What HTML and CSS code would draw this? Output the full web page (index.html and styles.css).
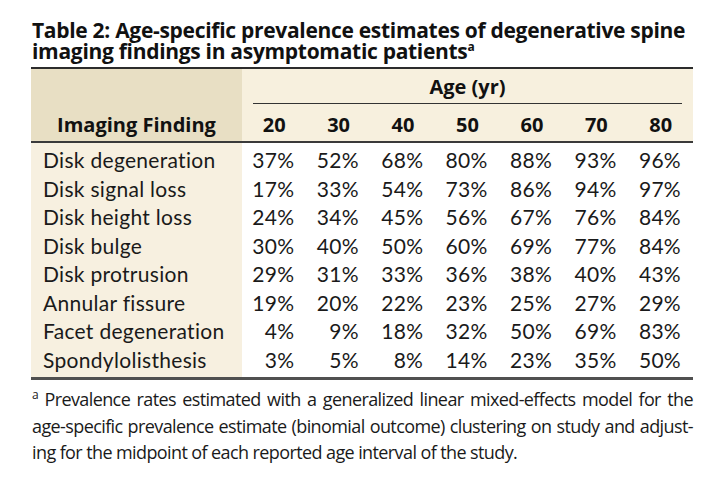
FILE: index.html
```html
<!DOCTYPE html>
<html lang="en">
<head>
<meta charset="utf-8">
<title>Table 2</title>
<link rel="stylesheet" href="styles.css">
</head>
<body>
<div class="page">
  <h1 class="caption">Table 2: Age-specific prevalence estimates of degenerative spine imaging findings in asymptomatic patients<sup>a</sup></h1>
  <table class="data">
    <thead>
      <tr class="group-row">
        <th class="finding" rowspan="2">Imaging Finding</th>
        <th class="age-group" colspan="7"><span class="age-label">Age (yr)</span></th>
      </tr>
      <tr class="age-row">
        <th>20</th><th>30</th><th>40</th><th>50</th><th>60</th><th>70</th><th>80</th>
      </tr>
    </thead>
    <tbody>
      <tr><td class="name">Disk degeneration</td><td>37%</td><td>52%</td><td>68%</td><td>80%</td><td>88%</td><td>93%</td><td>96%</td></tr>
      <tr><td class="name">Disk signal loss</td><td>17%</td><td>33%</td><td>54%</td><td>73%</td><td>86%</td><td>94%</td><td>97%</td></tr>
      <tr><td class="name">Disk height loss</td><td>24%</td><td>34%</td><td>45%</td><td>56%</td><td>67%</td><td>76%</td><td>84%</td></tr>
      <tr><td class="name">Disk bulge</td><td>30%</td><td>40%</td><td>50%</td><td>60%</td><td>69%</td><td>77%</td><td>84%</td></tr>
      <tr><td class="name">Disk protrusion</td><td>29%</td><td>31%</td><td>33%</td><td>36%</td><td>38%</td><td>40%</td><td>43%</td></tr>
      <tr><td class="name">Annular fissure</td><td>19%</td><td>20%</td><td>22%</td><td>23%</td><td>25%</td><td>27%</td><td>29%</td></tr>
      <tr><td class="name">Facet degeneration</td><td>4%</td><td>9%</td><td>18%</td><td>32%</td><td>50%</td><td>69%</td><td>83%</td></tr>
      <tr><td class="name">Spondylolisthesis</td><td>3%</td><td>5%</td><td>8%</td><td>14%</td><td>23%</td><td>35%</td><td>50%</td></tr>
    </tbody>
  </table>
  <p class="note">
    <span class="line full"><sup>a</sup> Prevalence rates estimated with a generalized linear mixed-effects model for the</span>
    <span class="line full">age-specific prevalence estimate (binomial outcome) clustering on study and adjust-</span>
    <span class="line">ing for the midpoint of each reported age interval of the study.</span>
  </p>
</div>
</body>
</html>
```

FILE: styles.css
```css
html, body {
  margin: 0;
  padding: 0;
  background: #ffffff;
}

.page {
  width: 662px;
  padding: 20px 0 0 31px;
  color: #1a1a1a;
}

.caption {
  margin: 0 0 5px 1px;
  font-family: "Open Sans", "Liberation Sans", sans-serif;
  font-weight: 700;
  font-size: 21px;
  line-height: 21px;
  letter-spacing: -0.3px;
  color: #111;
}

.caption sup {
  font-size: 12px;
  line-height: 0;
  vertical-align: 8px;
  letter-spacing: 0;
}

.data {
  width: 662px;
  border-collapse: collapse;
  border-top: 2px solid #2c2c2c;
  border-bottom: 3px solid #505050;
  font-family: "Lato", "Open Sans", sans-serif;
  font-size: 21px;
  color: #1a1a1a;
  table-layout: fixed;
}

.data th {
  font-family: "Open Sans", "Liberation Sans", sans-serif;
  font-weight: 700;
  font-size: 20px;
  line-height: 24px;
  padding: 0;
  background: #f7f0de;
  color: #111;
}

.data th.finding {
  width: 211px;
  background: #e8dfc4;
  vertical-align: bottom;
  text-align: center;
  padding: 0 0 4px 0;
  border-bottom: 2px solid #3a3a3a;
}

.group-row th.age-group {
  padding: 6px 11px 0;
  vertical-align: bottom;
}

.age-label {
  display: block;
  border-bottom: 1.5px solid #333;
  padding-bottom: 4px;
}

.age-row th {
  text-align: center;
  vertical-align: bottom;
  padding: 9px 0 4px;
  border-bottom: 2px solid #3a3a3a;
}

.data td {
  height: 28.5px;
  padding: 0 12px 0 0;
  text-align: right;
  line-height: 28.5px;
  letter-spacing: 0.3px;
  white-space: nowrap;
}

.data td.name {
  background: #f7f0e0;
  text-align: left;
  padding: 0 0 0 12px;
}

.data tbody tr:first-child td {
  padding-top: 3px;
}

.data tbody tr:last-child td {
  padding-bottom: 3px;
}

.note {
  margin: 6px 0 0 1px;
  font-family: "Open Sans", "Liberation Sans", sans-serif;
  font-size: 18px;
  line-height: 26.5px;
  letter-spacing: -0.6px;
  color: #1a1a1a;
}

.note .line {
  display: block;
}

.note .line.full {
  text-align: justify;
  text-align-last: justify;
}

.note sup {
  font-size: 12px;
  line-height: 0;
  vertical-align: 7px;
}
```
